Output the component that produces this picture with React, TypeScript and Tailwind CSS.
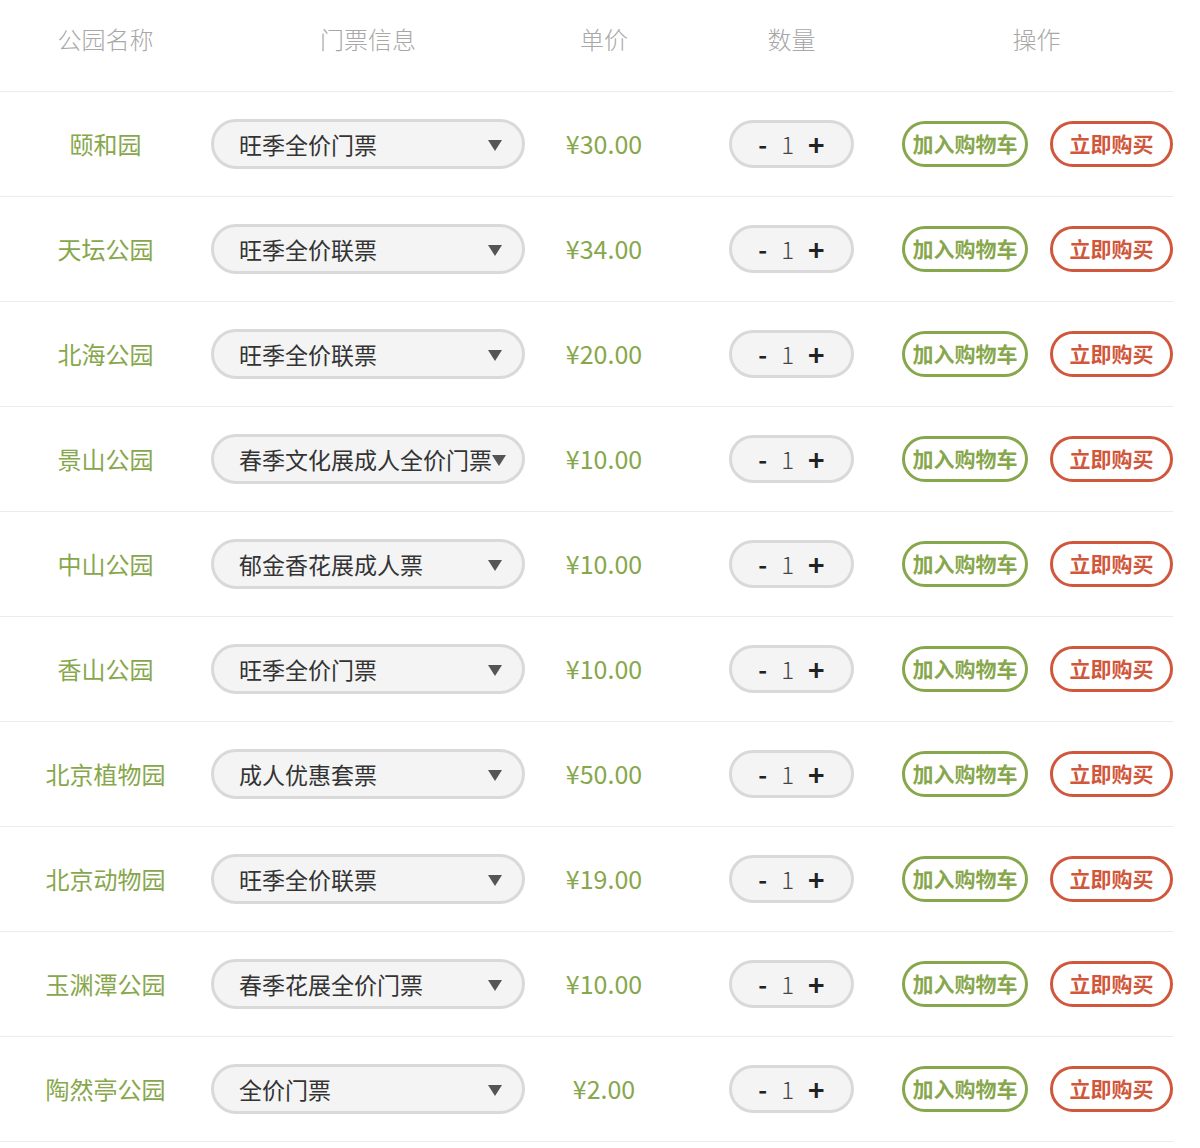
import React from 'react';

interface TicketRow {
    name: string;
    ticket: string;
    price: string;
}

const rows: TicketRow[] = [
    { name: '颐和园', ticket: '旺季全价门票', price: '¥30.00' },
    { name: '天坛公园', ticket: '旺季全价联票', price: '¥34.00' },
    { name: '北海公园', ticket: '旺季全价联票', price: '¥20.00' },
    { name: '景山公园', ticket: '春季文化展成人全价门票', price: '¥10.00' },
    { name: '中山公园', ticket: '郁金香花展成人票', price: '¥10.00' },
    { name: '香山公园', ticket: '旺季全价门票', price: '¥10.00' },
    { name: '北京植物园', ticket: '成人优惠套票', price: '¥50.00' },
    { name: '北京动物园', ticket: '旺季全价联票', price: '¥19.00' },
    { name: '玉渊潭公园', ticket: '春季花展全价门票', price: '¥10.00' },
    { name: '陶然亭公园', ticket: '全价门票', price: '¥2.00' },
];

const cols = 'grid grid-cols-[211px_314px_158px_217px_273px]';

export default function App() {
    return (
        <div className="w-[1200px] bg-white font-['Noto_Sans_CJK_SC','Microsoft_YaHei',sans-serif]">
            <div className="w-[1173px]">
                {/* Header */}
                <div className={`${cols} h-[92px] items-center border-b border-[#ececec] pb-[14px] text-[24px] font-light text-[#a8a8a8]`}>
                    <div className="text-center">公园名称</div>
                    <div className="text-center">门票信息</div>
                    <div className="text-center">单价</div>
                    <div className="text-center">数量</div>
                    <div className="text-center">操作</div>
                </div>

                {rows.map((row) => (
                    <div key={row.name} className={`${cols} h-[105px] items-center border-b border-[#ececec]`}>
                        {/* Park name */}
                        <div className="text-center text-[24px] text-[#87a74c]">{row.name}</div>

                        {/* Ticket select */}
                        <div className="flex h-[50px] items-center rounded-full border-[3px] border-[#d9d9d9] bg-[#f4f4f4] pl-[25px] pr-[20px]">
                            <span className="flex-1 whitespace-nowrap text-[23px] text-[#333]">{row.ticket}</span>
                            <svg width="14" height="11" viewBox="0 0 14 11" className="mt-[3px] shrink-0">
                                <path d="M0 0 H14 L7 11 Z" fill="#555" />
                            </svg>
                        </div>

                        {/* Price */}
                        <div className="text-center text-[25px] text-[#87a74c]">{row.price}</div>

                        {/* Quantity */}
                        <div className="flex justify-center">
                            <div className="flex h-[48px] w-[125px] items-center justify-center gap-[14px] rounded-full border-[3px] border-[#d9d9d9] bg-[#f4f4f4] text-[24px]">
                                <span className="font-bold text-[#222]">-</span>
                                <span className="font-light text-[#444]">1</span>
                                <span className="text-[28px] font-bold leading-none text-[#222]">+</span>
                            </div>
                        </div>

                        {/* Actions */}
                        <div className="flex items-center justify-end gap-[22px]">
                            <button className="flex h-[46px] w-[126px] items-center justify-center rounded-full border-[3px] border-[#87a74c] text-[21px] font-bold text-[#87a74c]">
                                加入购物车
                            </button>
                            <button className="flex h-[46px] w-[123px] items-center justify-center rounded-full border-[3px] border-[#d0573b] text-[21px] font-bold text-[#d0573b]">
                                立即购买
                            </button>
                        </div>
                    </div>
                ))}
            </div>
        </div>
    );
}
